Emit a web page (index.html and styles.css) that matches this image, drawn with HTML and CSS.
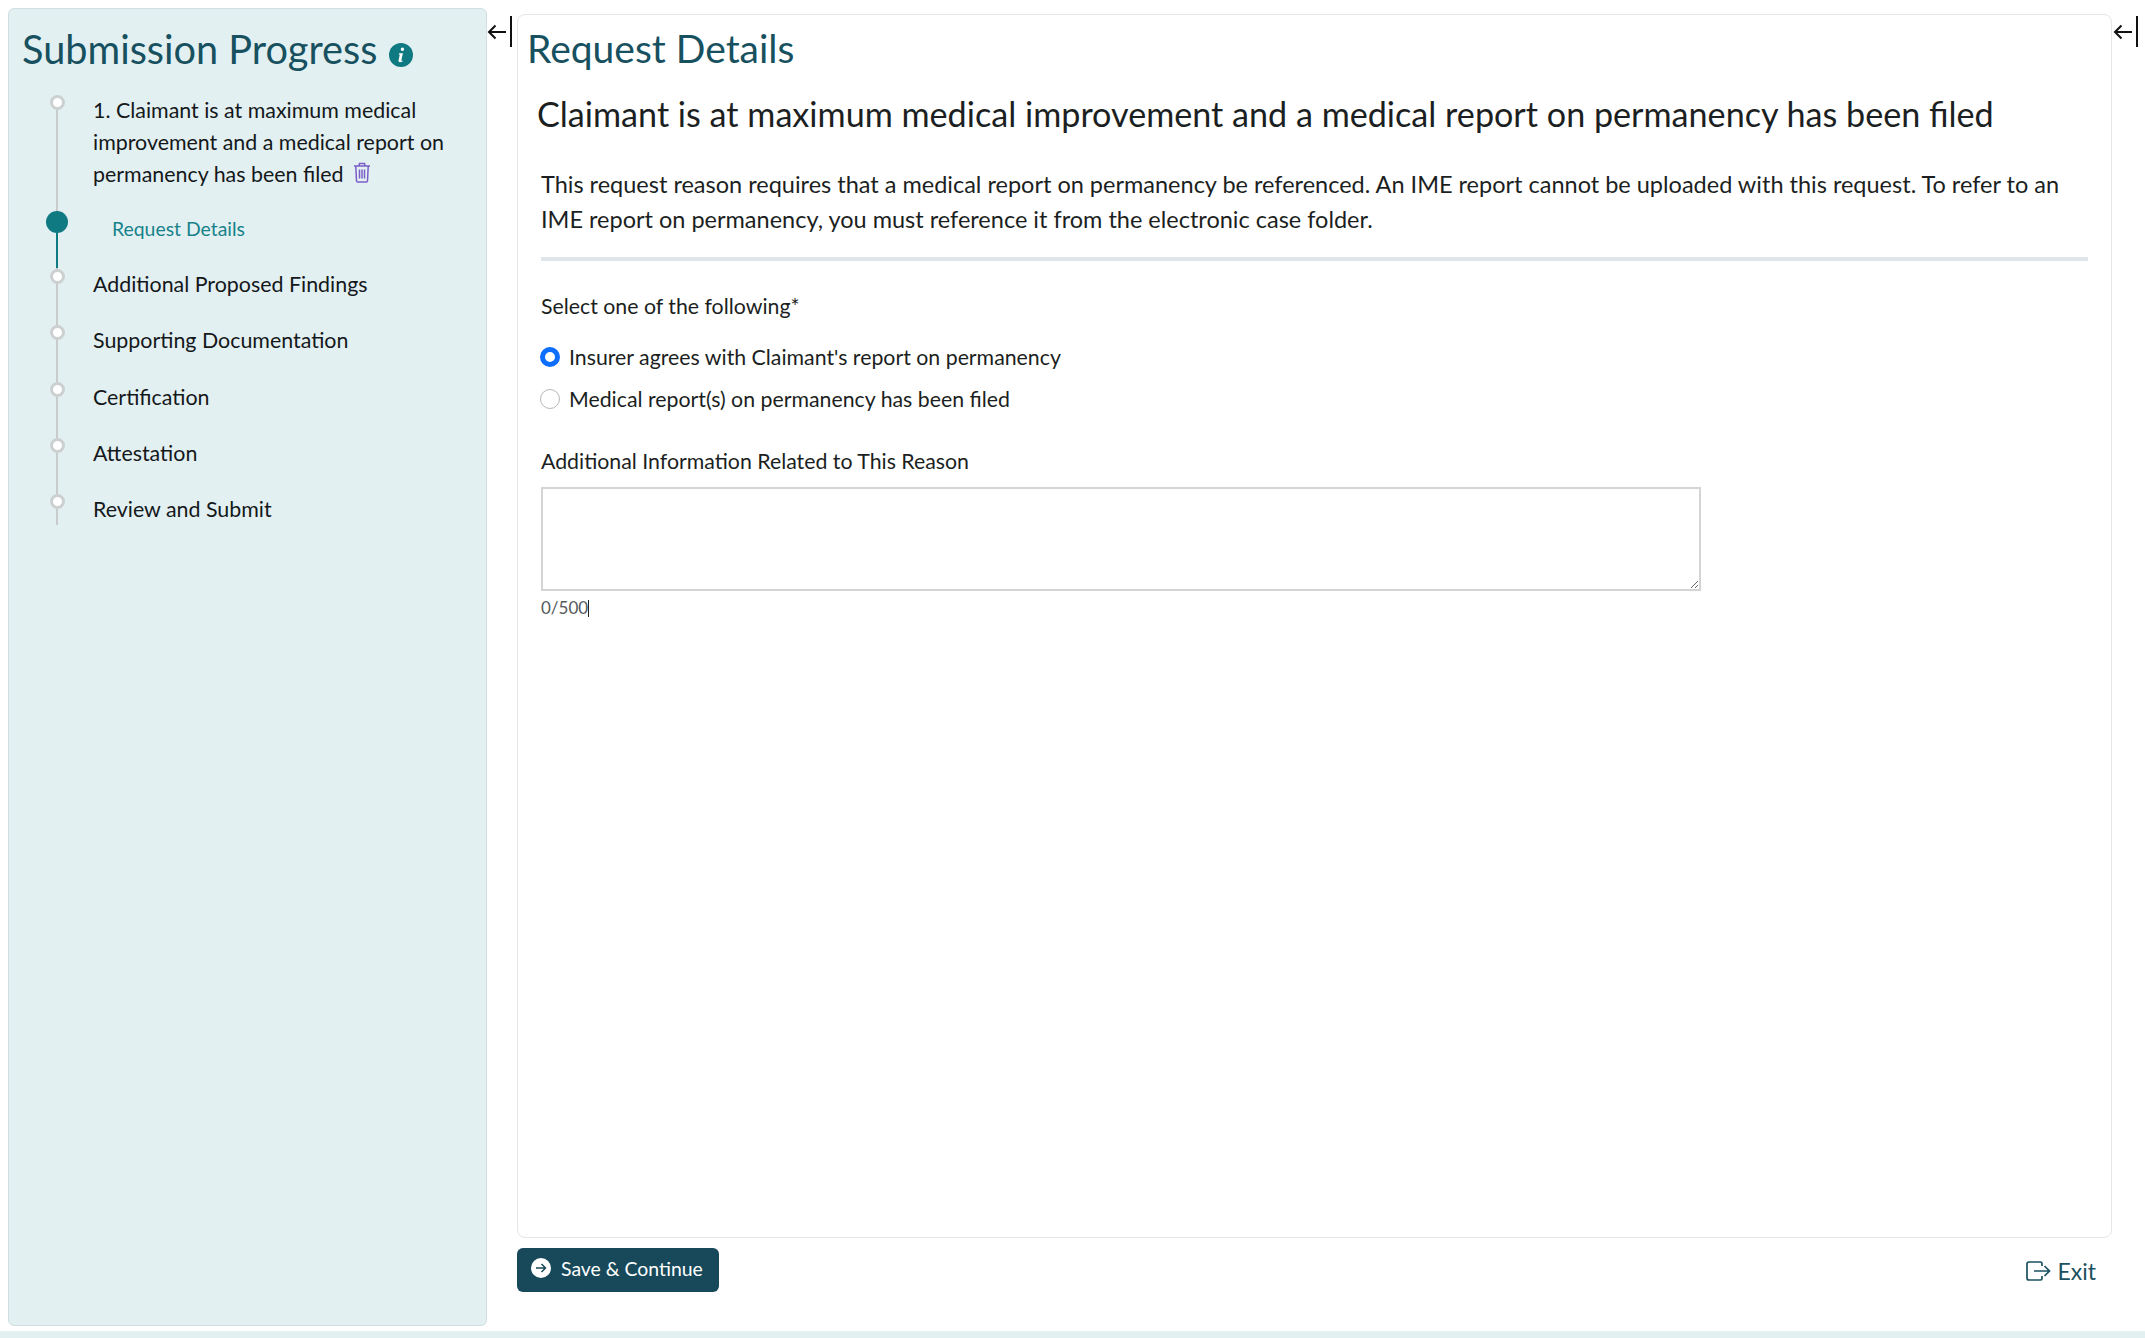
FILE: index.html
```html
<!DOCTYPE html>
<html lang="en">
<head>
<meta charset="utf-8">
<title>Request Details</title>
<link rel="stylesheet" href="styles.css">
</head>
<body>
<div class="page">
  <aside class="sidebar">
    <h2 class="side-title">Submission Progress
      <svg class="info" viewBox="0 0 24 24" aria-hidden="true"><circle cx="12" cy="12" r="12" fill="#0f7a82"/><path d="M13.400 4.600a1.700 1.700 0 1 1 0 3.400 1.700 1.700 0 0 1 0-3.400zM10 10.200h3.900l-1.600 7.200c-.1.500.4.600 1.400.1l-.2.900c-1.300.8-4.200 1.400-4-.8l1.300-6.100-1 0z" fill="#fff"/></svg>
    </h2>
    <ol class="steps">
      <li class="step step-first">1. Claimant is at maximum medical improvement and a medical report on permanency has been filed
        <svg class="trash" viewBox="0 0 18 21" aria-hidden="true"><g fill="none" stroke="#7b5fc9" stroke-width="1.500"><path d="M1 4h16M6 3.500 6.500 1.500h5l.5 2M2.800 4.500l.7 14.200c0 .8.500 1.300 1.300 1.300h8.400c.8 0 1.300-.500 1.300-1.300l.7-14.200"/><path d="M6.500 7.500v9M9 7.500v9M11.500 7.500v9"/></g></svg>
      </li>
      <li class="step step-current">Request Details</li>
      <li class="step">Additional Proposed Findings</li>
      <li class="step">Supporting Documentation</li>
      <li class="step">Certification</li>
      <li class="step">Attestation</li>
      <li class="step step-last">Review and Submit</li>
    </ol>
  </aside>
  <div class="toggle">
    <svg class="collapse" viewBox="0 0 26 32" aria-hidden="true"><path d="M19 16H2M8.500 9.500 2 16l6.500 6.500" fill="none" stroke="#111" stroke-width="2"/><path d="M24 0v31" stroke="#111" stroke-width="2" fill="none"/></svg>
  </div>
  <div class="content">
    <main class="panel">
      <h1 class="panel-title">Request Details</h1>
      <h2 class="reason">Claimant is at maximum medical improvement and a medical report on permanency has been filed</h2>
      <div class="body">
        <p class="intro">This request reason requires that a medical report on permanency be referenced. An IME report cannot be uploaded with this request. To refer to an IME report on permanency, you must reference it from the electronic case folder.</p>
        <hr class="rule">
        <p class="question">Select one of the following*</p>
        <label class="choice"><span class="radio radio-on"></span>Insurer agrees with Claimant's report on permanency</label>
        <label class="choice"><span class="radio"></span>Medical report(s) on permanency has been filed</label>
        <label class="field-label" for="info">Additional Information Related to This Reason</label>
        <textarea id="info" class="info-box"></textarea>
        <div class="count">0/500<span class="caret"></span></div>
      </div>
    </main>
    <div class="actions">
      <button class="save" type="button">
        <svg class="save-icon" viewBox="0 0 20 20" aria-hidden="true"><circle cx="10" cy="10" r="10" fill="#fff"/><path d="M5 10h9.500M10.500 6l4 4-4 4" fill="none" stroke="#17495a" stroke-width="1.500"/></svg>
        Save &amp; Continue
      </button>
      <a class="exit" href="#">
        <svg class="exit-icon" viewBox="0 0 25 20" aria-hidden="true"><path d="M16 5V2.500C16 1.500 15.300 1 14.500 1H3C2 1 1 1.700 1 3v14c0 1.300 1 2 2 2h11.500c.8 0 1.500-.5 1.500-1.500V15M8 10h15.500M18.500 5l5 5-5 5" fill="none" stroke="#1b5160" stroke-width="1.700"/></svg>
        Exit
      </a>
    </div>
  </div>
  <div class="toggle toggle-right">
    <svg class="collapse" viewBox="0 0 26 32" aria-hidden="true"><path d="M19 16H2M8.500 9.500 2 16l6.500 6.500" fill="none" stroke="#111" stroke-width="2"/><path d="M24 0v31" stroke="#111" stroke-width="2" fill="none"/></svg>
  </div>
</div>
<div class="strip"></div>
</body>
</html>
```
FILE: styles.css
```css
*, *::before, *::after { box-sizing: border-box; }
html, body { margin: 0; height: 100%; }
body {
  font-family: "Lato", "Open Sans", sans-serif;
  color: #1c1f22;
  background: #fff;
  display: flex;
  flex-direction: column;
  overflow: hidden;
}
.page {
  flex: 1;
  display: flex;
  padding: 8px 0 5px 8px;
  min-height: 0;
}
.strip { height: 7px; background: #e3f0f1; }

.sidebar {
  width: 479px;
  flex: none;
  background: #e3f0f1;
  border: 1px solid #cfdfe3;
  border-radius: 6px;
  padding: 17px 14px 0 13px;
}
.side-title {
  margin: 0;
  font-size: 39.700px;
  line-height: 46px;
  font-weight: 400;
  color: #17505f;
  white-space: nowrap;
}
.info { width: 24px; height: 24px; margin-left: 1px; vertical-align: -3px; }

.steps { list-style: none; margin: 17px 0 0; padding: 0 0 0 71px; font-size: 21.400px; }
.step {
  position: relative;
  height: 56.300px;
  line-height: 32px;
  color: #14181b;
}
.step::before {
  content: "";
  position: absolute;
  left: -37px;
  top: 0;
  bottom: 0;
  width: 2px;
  background: #c9cccd;
}
.step::after {
  content: "";
  position: absolute;
  left: -43px;
  top: 1px;
  width: 15px;
  height: 15px;
  border-radius: 50%;
  background: #fff;
  border: 3px solid #cdd0d1;
}
.step-first { height: 122px; padding-top: 5px; padding-right: 14px; }
.step-first::before { top: 7px; }
.step-first::after { top: 6px; }
.step-current {
  height: 57px;
  font-size: 19.400px;
  color: #17828b;
  padding-left: 19px;
  padding-top: 2px;
}
.step-current::before { background: #0f7a82; }
.step-current::after {
  width: 22px;
  height: 22px;
  left: -47px;
  top: 0;
  background: #0f7a82;
  border: 0;
}
.step-last { height: 32px; }
.trash { width: 18px; height: 21px; vertical-align: -1px; margin-left: 4px; }

.toggle { width: 30px; flex: none; padding-top: 8px; }
.toggle-right { width: 33px; padding-left: 1px; }
.collapse { width: 26px; height: 32px; display: block; }

.content { flex: 1; display: flex; flex-direction: column; min-width: 0; }
.panel {
  margin-top: 6px;
  height: 1224px;
  border: 1px solid #e4e6e7;
  border-radius: 8px;
  padding: 10px 23px 0 9px;
}
.panel-title { margin: 0; font-size: 39px; line-height: 46px; font-weight: 400; color: #17505f; }
.reason { margin: 23px 0 0 10px; font-size: 34.150px; line-height: 40px; font-weight: 400; color: #1c1f22; white-space: nowrap; }
.body { padding-left: 14px; }
.intro { margin: 33px 0 0; font-size: 23.500px; line-height: 35px; }
.rule { margin: 20px 0 0; border: 0; height: 4px; background: #dfe5e8; }
.question { margin: 31px 0 0; font-size: 21.300px; line-height: 28px; }
.choice { display: flex; align-items: center; gap: 9px; font-size: 21.300px; line-height: 28px; }
.question + .choice { margin-top: 23px; }
.choice + .choice { margin-top: 14px; }
.radio { width: 20px; height: 20px; margin-left: -1px; border-radius: 50%; border: 1px solid #b5b8bb; background: #fff; flex: none; }
.radio-on { border: 5px solid #0d6efd; }
.field-label { display: block; margin-top: 34px; font-size: 21.300px; line-height: 28px; }
.info-box { display: block; margin-top: 12px; width: 1160px; height: 104px; border: 2px solid #d2d4d5; border-radius: 0; background: #fff; outline: 0; }
.count { margin-top: 6px; font-size: 17px; line-height: 22px; color: #55595c; }
.caret { display: inline-block; width: 1px; height: 17px; background: #222; vertical-align: -3px; }

.actions { display: flex; justify-content: space-between; align-items: flex-start; margin-top: 10px; }
.save {
  display: flex;
  align-items: center;
  gap: 10px;
  width: 202px;
  height: 44px;
  padding: 0 0 4px 14px;
  border: 0;
  border-radius: 6px;
  background: #17495a;
  color: #fff;
  font: 400 19.400px "Lato", sans-serif;
}
.save-icon { width: 20px; height: 20px; flex: none; }
.exit { display: flex; align-items: center; gap: 6px; margin: 9px 16px 0 0; font-size: 23px; line-height: 28px; color: #1b5160; text-decoration: none; }
.exit-icon { width: 25px; height: 20px; }
```
